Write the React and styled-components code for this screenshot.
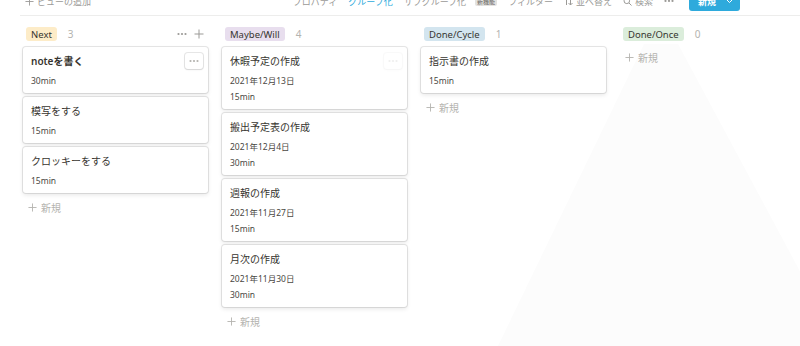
import React from 'react';
import styled, { createGlobalStyle } from 'styled-components';

const columns = [
  {
    id: 'next',
    name: 'Next',
    tone: '#fdecc8',
    showActions: true,
    cards: [
      { title: 'noteを書く', min: '30min', hover: true },
      { title: '模写をする', min: '15min' },
      { title: 'クロッキーをする', min: '15min' },
    ],
  },
  {
    id: 'maybe',
    name: 'Maybe/Will',
    tone: '#e8deee',
    cards: [
      { title: '休暇予定の作成', date: '2021年12月13日', min: '15min', ghost: true },
      { title: '搬出予定表の作成', date: '2021年12月4日', min: '30min' },
      { title: '週報の作成', date: '2021年11月27日', min: '15min' },
      { title: '月次の作成', date: '2021年11月30日', min: '30min' },
    ],
  },
  {
    id: 'cycle',
    name: 'Done/Cycle',
    tone: '#d3e5ef',
    cards: [{ title: '指示書の作成', min: '15min' }],
  },
  {
    id: 'once',
    name: 'Done/Once',
    tone: '#dbeddb',
    cards: [],
  },
];

const GlobalStyle = createGlobalStyle`
  body {
    margin: 0;
    background: #ffffff;
    font-family: "Noto Sans", "Noto Sans CJK JP", sans-serif;
    color: #37352f;
    overflow: hidden;
  }
`;

const Page = styled.div`
  position: relative;
  width: 800px;
  height: 346px;
  overflow: hidden;
`;

const Backdrop = styled.svg`
  position: absolute;
  left: 0;
  top: 0;
  z-index: 0;
  pointer-events: none;
`;

const Toolbar = styled.div`
  position: relative;
  z-index: 1;
  display: flex;
  align-items: center;
  justify-content: space-between;
  height: 28px;
  margin: -13px 0 0 20px;
  padding: 0 60px 0 5px;
  border-bottom: 1px solid #ededec;
  font-size: 9px;
  color: #9b9a97;
`;

const ToolGroup = styled.div`
  display: flex;
  align-items: center;
  gap: 11px;
`;

const ToolItem = styled.span`
  display: flex;
  align-items: center;
  gap: 3px;
  color: ${({ $active }) => ($active ? '#2eaadc' : '#9b9a97')};
  white-space: nowrap;
`;

const Badge = styled.span`
  background: #e3e2e0;
  color: #6b6a66;
  font-size: 6px;
  border-radius: 2px;
  padding: 0 2px;
  margin-left: 6px;
`;

const NewButton = styled.span`
  display: flex;
  align-items: center;
  height: 20px;
  padding: 0 7px 0 9px;
  gap: 10px;
  background: #2eaadc;
  color: #ffffff;
  border-radius: 3px;
  font-weight: 600;
  margin-left: 4px;
`;

const Board = styled.div`
  position: relative;
  z-index: 1;
  display: flex;
  gap: 14px;
  padding: 11px 0 0 23px;
`;

const Column = styled.div`
  width: 185px;
  flex: 0 0 185px;
  display: flex;
  flex-direction: column;
  gap: 4px;
`;

const ColumnHeader = styled.div`
  display: flex;
  align-items: center;
  height: 14px;
  margin-bottom: 2px;
  padding-left: 3px;
`;

const Tag = styled.span`
  display: inline-flex;
  align-items: center;
  height: 14px;
  padding: 0 5px;
  border-radius: 3px;
  background: ${({ $tone }) => $tone};
  font-size: 9.5px;
  color: #37352f;
`;

const Count = styled.span`
  margin-left: 11px;
  font-size: 10px;
  color: #b4b3af;
`;

const HeaderActions = styled.span`
  margin-left: auto;
  display: flex;
  align-items: center;
  gap: 7px;
  color: #9b9a97;
  padding-right: 4px;
`;

const Card = styled.div`
  position: relative;
  background: #ffffff;
  border-radius: 3px;
  box-shadow: rgba(15, 15, 15, 0.1) 0 0 0 1px, rgba(15, 15, 15, 0.1) 0 2px 4px;
  padding: 6px 8px 4px;
`;

const CardTitle = styled.div`
  font-size: 10px;
  line-height: 16px;
  font-weight: ${({ $strong }) => ($strong ? 600 : 400)};
  color: #37352f;
  margin-bottom: 4px;
`;

const CardProp = styled.div`
  font-size: 8.5px;
  line-height: 16px;
  color: #4a4843;
`;

const MoreButton = styled.span`
  position: absolute;
  top: 6px;
  right: 5px;
  width: 18px;
  height: 16px;
  display: flex;
  align-items: center;
  justify-content: center;
  background: #ffffff;
  border-radius: 3px;
  box-shadow: rgba(15, 15, 15, 0.1) 0 0 0 1px, rgba(15, 15, 15, 0.08) 0 1px 2px;
  opacity: ${({ $faint }) => ($faint ? 0.2 : 1)};
`;

const AddRow = styled.div`
  display: flex;
  align-items: center;
  gap: 4px;
  height: 20px;
  padding-left: 5px;
  font-size: 10px;
  color: #b4b3af;
`;

const Dots = ({ color = '#9b9a97' }) => (
  <svg width="10" height="4" viewBox="0 0 10 4">
    <circle cx="1.5" cy="2" r="1.1" fill={color} />
    <circle cx="5" cy="2" r="1.1" fill={color} />
    <circle cx="8.5" cy="2" r="1.1" fill={color} />
  </svg>
);

const Plus = ({ size = 10, color = '#9b9a97' }) => (
  <svg width={size} height={size} viewBox="0 0 10 10">
    <path d="M5 0.5v9M0.5 5h9" stroke={color} strokeWidth="1" fill="none" />
  </svg>
);

const SortIcon = () => (
  <svg width="9" height="9" viewBox="0 0 9 9">
    <path d="M2.5 8V1M0.5 3l2-2 2 2M6.5 1v7M4.5 6l2 2 2-2" stroke="#9b9a97" fill="none" />
  </svg>
);

const SearchIcon = () => (
  <svg width="9" height="9" viewBox="0 0 9 9">
    <circle cx="3.8" cy="3.8" r="2.8" stroke="#9b9a97" fill="none" />
    <path d="M6 6l2.5 2.5" stroke="#9b9a97" />
  </svg>
);

const Chevron = () => (
  <svg width="7" height="5" viewBox="0 0 7 5">
    <path d="M0.5 0.5l3 3 3-3" stroke="#ffffff" fill="none" />
  </svg>
);

const BoardCard = ({ card }) => (
  <Card>
    <CardTitle $strong={card.hover}>{card.title}</CardTitle>
    {card.date && <CardProp>{card.date}</CardProp>}
    <CardProp>{card.min}</CardProp>
    {(card.hover || card.ghost) && (
      <MoreButton $faint={card.ghost}>
        <Dots color="#b4b3af" />
      </MoreButton>
    )}
  </Card>
);

const App = () => {
  return (
    <>
      <GlobalStyle />
      <Page>
        <Backdrop width="800" height="346">
          <polygon points="644,44 678,44 840,346 498,346" fill="#fcfcfc" />
        </Backdrop>
        <Toolbar>
          <ToolItem>
            <Plus size={9} />
            ビューの追加
          </ToolItem>
          <ToolGroup>
            <ToolItem>プロパティ</ToolItem>
            <ToolItem $active>グループ化</ToolItem>
            <ToolItem>
              サブグループ化<Badge>新機能</Badge>
            </ToolItem>
            <ToolItem>フィルター</ToolItem>
            <ToolItem>
              <SortIcon />
              並べ替え
            </ToolItem>
            <ToolItem>
              <SearchIcon />
              検索
            </ToolItem>
            <ToolItem>
              <Dots />
            </ToolItem>
            <NewButton>
              新規
              <Chevron />
            </NewButton>
          </ToolGroup>
        </Toolbar>
        <Board>
          {columns.map((col) => (
            <Column key={col.id}>
              <ColumnHeader>
                <Tag $tone={col.tone}>{col.name}</Tag>
                <Count>{col.cards.length}</Count>
                {col.showActions && (
                  <HeaderActions>
                    <Dots />
                    <Plus />
                  </HeaderActions>
                )}
              </ColumnHeader>
              {col.cards.map((card) => (
                <BoardCard key={card.title} card={card} />
              ))}
              <AddRow>
                <Plus size={9} color="#b4b3af" />
                新規
              </AddRow>
            </Column>
          ))}
        </Board>
      </Page>
    </>
  );
};

export default App;
